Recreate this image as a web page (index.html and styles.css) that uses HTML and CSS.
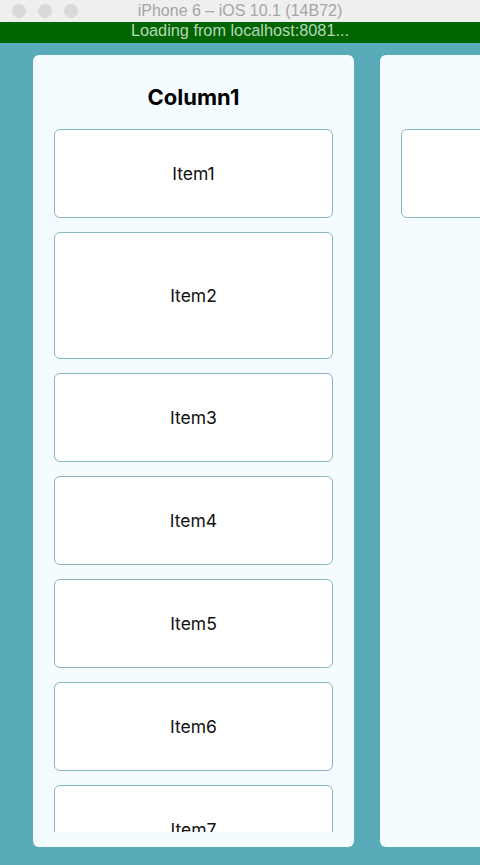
FILE: index.html
```html
<!DOCTYPE html>
<html>
<head>
<meta charset="utf-8">
<link rel="stylesheet" href="styles.css">
</head>
<body>
<div class="titlebar">
  <div class="lights"><span class="light"></span><span class="light"></span><span class="light"></span></div>
  <div class="title">iPhone 6 – iOS 10.1 (14B72)</div>
</div>
<div class="loading">Loading from localhost:8081...</div>
<div class="board">
  <div class="column">
    <div class="col-title">Column1</div>
    <div class="items">
      <div class="item">Item1</div>
      <div class="item tall">Item2</div>
      <div class="item">Item3</div>
      <div class="item">Item4</div>
      <div class="item">Item5</div>
      <div class="item">Item6</div>
      <div class="item">Item7</div>
    </div>
  </div>
  <div class="column">
    <div class="col-title"></div>
    <div class="items">
      <div class="item"></div>
    </div>
  </div>
</div>
</body>
</html>
```
FILE: styles.css
```css
html, body {
  margin: 0;
  padding: 0;
}
body {
  width: 480px;
  height: 865px;
  overflow: hidden;
  background: #5aabb9;
  font-family: Inter, "Noto Sans", sans-serif;
}
.titlebar {
  height: 22px;
  background: #efefef;
  position: relative;
  display: flex;
  align-items: center;
  justify-content: center;
}
.lights {
  position: absolute;
  left: 12px;
  top: 4px;
  display: flex;
  gap: 12px;
}
.light {
  width: 14px;
  height: 14px;
  border-radius: 50%;
  background: #d9d9d9;
}
.title {
  font-family: "Liberation Sans", Arial, sans-serif;
  font-size: 16px;
  color: #a5a5a5;
  line-height: 22px;
}
.loading {
  height: 21px;
  background: #016601;
  color: #b9d6b9;
  font-family: "Liberation Sans", Arial, sans-serif;
  font-size: 16.3px;
  line-height: 17px;
  text-align: center;
}
.board {
  display: flex;
  gap: 26px;
  padding: 12px 0 0 33px;
}
.column {
  flex-shrink: 0;
  width: 321px;
  height: 792px;
  background: #f5fcff;
  border-radius: 6px;
  display: flex;
  flex-direction: column;
}
.col-title {
  font-size: 22px;
  font-weight: 700;
  color: #000;
  text-align: center;
  padding-top: 28px;
  height: 46px;
  line-height: 28px;
  box-sizing: content-box;
}
.items {
  flex: 1;
  min-height: 0;
  overflow: hidden;
  margin: 0 21px 15px;
  display: flex;
  flex-direction: column;
  gap: 14px;
}
.item {
  box-sizing: border-box;
  flex-shrink: 0;
  height: 89px;
  background: #fff;
  border: 1.5px solid #8ab6c0;
  border-radius: 6px;
  display: flex;
  align-items: center;
  justify-content: center;
  font-size: 17.5px;
  color: #111;
}
.item.tall {
  height: 127px;
}
```
